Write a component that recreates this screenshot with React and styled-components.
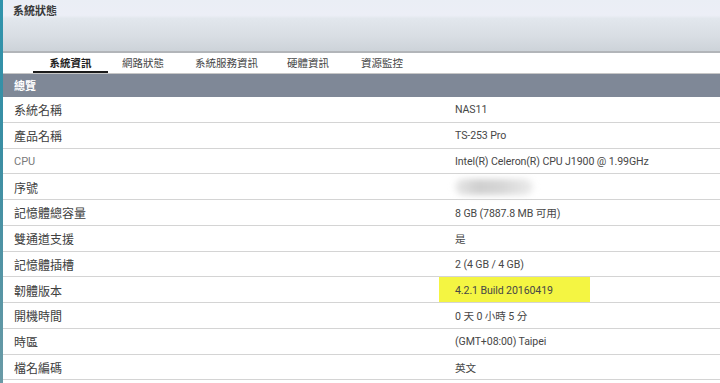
import React from "react";
import styled, { createGlobalStyle } from "styled-components";

const Global = createGlobalStyle`
  html, body { margin: 0; padding: 0; background: #ffffff; }
  body { width: 720px; height: 383px; overflow: hidden; }
`;

const Frame = styled.div`
  display: flex;
  width: 720px;
  height: 383px;
  background: #fff;
`;

const EdgeBar = styled.div`
  width: 3px;
  flex: none;
  background: linear-gradient(180deg, #2f93ac 0%, #3b8ea3 40%, #6a9aa6 100%);
`;

const Main = styled.div`
  flex: 1;
  display: flex;
  flex-direction: column;
  min-width: 0;
`;

const Header = styled.div`
  background: linear-gradient(180deg, #eaeef5 0%, #eceef6 30%, #e2e7ed 36%, #d9dee4 70%, #cdd3d9 100%);
  border-bottom: 2px solid #b2b5b9;
  padding: 3px 10px 0;
  height: 48px;
`;

const Title = styled.div`
  font-family: "Noto Sans CJK TC", sans-serif;
  font-size: 11px;
  font-weight: 700;
  color: #3a3a3a;
  line-height: 14px;
`;

const TabBar = styled.div`
  display: flex;
  align-items: flex-end;
  height: 20px;
  padding-left: 30px;
  border-bottom: 1px solid #c6c6c6;
  background: #fff;
`;

const Tab = styled.div`
  font-family: "Noto Sans CJK TC", sans-serif;
  font-size: 10.5px;
  line-height: 17px;
  color: ${(p) => (p.$active ? "#222" : "#444")};
  font-weight: ${(p) => (p.$active ? 600 : 400)};
  width: ${(p) => p.$w}px;
  text-align: center;
  border-bottom: 2px solid ${(p) => (p.$active ? "#1a1a1a" : "transparent")};
`;

const SectionHead = styled.div`
  height: 23px;
  background: #7f8897;
  color: #fff;
  font-family: "Noto Sans CJK TC", sans-serif;
  font-size: 11px;
  font-weight: 700;
  line-height: 22px;
  padding-left: 11px;
`;

const Row = styled.div`
  display: flex;
  align-items: center;
  height: 25.75px;
  padding-top: 1px;
  box-sizing: border-box;
  border-bottom: 1px solid #d4d4d4;
`;

const Label = styled.div`
  width: 452px;
  padding-left: 11px;
  box-sizing: border-box;
  font-family: ${(p) => (p.$latin ? "Roboto, sans-serif" : "'Noto Sans CJK TC', sans-serif")};
  font-size: ${(p) => (p.$latin ? "11px" : "12px")};
  color: ${(p) => (p.$latin ? "#7a7a7a" : "#404040")};
`;

const ValueCell = styled.div`
  flex: none;
  align-self: stretch;
  display: flex;
  align-items: center;
  margin: -1px 0 0 -16px;
  padding-left: 16px;
  width: ${(p) => (p.$highlight ? "151px" : "auto")};
  box-sizing: border-box;
  background: ${(p) => (p.$highlight ? "#f4f542" : "transparent")};
`;

const Value = styled.span`
  font-family: Roboto, "Noto Sans CJK TC", sans-serif;
  font-size: 10.6px;
  letter-spacing: -0.1px;
  color: #474747;
  white-space: nowrap;
  padding-top: 1px;
`;

const Blurred = styled.span`
  display: inline-block;
  width: 78px;
  height: 16px;
  border-radius: 8px;
  background: linear-gradient(90deg, #e8e8e8, #cfcfcf 30%, #d6d6d6 60%, #ececec);
  filter: blur(3px);
`;

const tabs = [
  { t: "系統資訊", w: 75, active: true },
  { t: "網路狀態", w: 70 },
  { t: "系統服務資訊", w: 97 },
  { t: "硬體資訊", w: 66 },
  { t: "資源監控", w: 82 },
];

const rows = [
  { k: "系統名稱", v: "NAS11" },
  { k: "產品名稱", v: "TS-253 Pro" },
  { k: "CPU", v: "Intel(R) Celeron(R) CPU J1900 @ 1.99GHz", latin: true },
  { k: "序號", blur: true },
  { k: "記憶體總容量", v: "8 GB (7887.8 MB 可用)" },
  { k: "雙通道支援", v: "是" },
  { k: "記憶體插槽", v: "2 (4 GB / 4 GB)" },
  { k: "韌體版本", v: "4.2.1 Build 20160419", hl: true },
  { k: "開機時間", v: "0 天 0 小時 5 分" },
  { k: "時區", v: "(GMT+08:00) Taipei" },
  { k: "檔名編碼", v: "英文" },
];

export default function App() {
  return (
    <>
      <Global />
      <Frame>
        <EdgeBar />
        <Main>
          <Header>
            <Title>系統狀態</Title>
          </Header>
          <TabBar>
            {tabs.map((t) => (
              <Tab key={t.t} $w={t.w} $active={t.active}>
                {t.t}
              </Tab>
            ))}
          </TabBar>
          <SectionHead>總覽</SectionHead>
          {rows.map((r) => (
            <Row key={r.k}>
              <Label $latin={r.latin}>{r.k}</Label>
              <ValueCell $highlight={r.hl}>
                {r.blur ? <Blurred /> : <Value>{r.v}</Value>}
              </ValueCell>
            </Row>
          ))}
        </Main>
      </Frame>
    </>
  );
}
